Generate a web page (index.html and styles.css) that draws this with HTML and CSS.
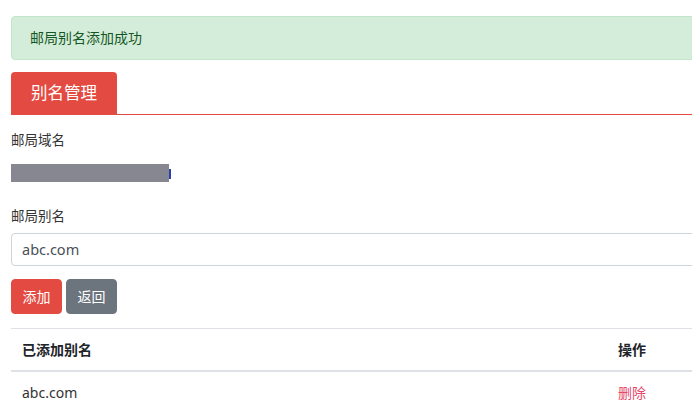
FILE: index.html
```html
<!DOCTYPE html>
<html lang="zh-CN">
<head>
<meta charset="utf-8">
<title>别名管理</title>
<link rel="stylesheet" href="styles.css">
</head>
<body>
<div class="page">
  <div class="alert">邮局别名添加成功</div>
  <div class="tabs"><span class="tab">别名管理</span></div>
  <div class="label first">邮局域名</div>
  <div class="domain"><span class="redact"></span><span class="tail"></span></div>
  <div class="label second">邮局别名</div>
  <div class="input">abc.com</div>
  <div class="actions">
    <button class="btn btn-red">添加</button>
    <button class="btn btn-gray">返回</button>
  </div>
  <table class="list">
    <thead>
      <tr><th class="c1">已添加别名</th><th class="c2">操作</th></tr>
    </thead>
    <tbody>
      <tr><td class="c1">abc.com</td><td class="c2"><a class="del">删除</a></td></tr>
    </tbody>
  </table>
</div>
</body>
</html>
```

FILE: styles.css
```css
html, body {
  margin: 0;
  padding: 0;
  overflow: hidden;
  background: #fff;
}
body {
  font-family: "Noto Sans", "Noto Sans CJK SC", sans-serif;
  color: #212529;
  font-size: 14px;
}
.page {
  width: 740px;
  padding: 16px 0 0 11px;
}
.alert {
  background: #d4edda;
  border: 1px solid #c3e6cb;
  border-radius: 4px;
  color: #155724;
  padding: 12px 18px;
  line-height: 18px;
  font-size: 14px;
}
.tabs {
  margin-top: 12px;
  display: flex;
  border-bottom: 1px solid #e34b42;
}
.tab {
  background: #e34b42;
  color: #fff;
  font-size: 16.5px;
  height: 42px;
  line-height: 42px;
  padding: 0 20px;
  border-radius: 4px 4px 0 0;
}
.label {
  font-size: 13.5px;
  line-height: 20px;
  color: #333;
}
.label.first { margin-top: 15px; }
.label.second { margin-top: 24px; }
.domain {
  margin-top: 14px;
  display: flex;
  align-items: center;
  height: 18px;
}
.redact {
  width: 158px;
  height: 18px;
  background: #878792;
}
.tail {
  width: 2px;
  height: 10px;
  margin-top: 2px;
  background: #2a3fb0;
}
.input {
  margin-top: 7px;
  height: 31px;
  line-height: 31px;
  border: 1px solid #ced4da;
  border-radius: 4px;
  padding-left: 10px;
  color: #495057;
  font-size: 14.5px;
}
.actions {
  margin-top: 13px;
  display: flex;
  gap: 4px;
}
.btn {
  font-family: inherit;
  font-size: 14px;
  color: #fff;
  border: 1px solid transparent;
  border-radius: 4px;
  height: 35px;
  width: 51px;
  padding: 0;
  line-height: 33px;
}
.btn-red { background: #e34b42; border-color: #e34b42; }
.btn-gray { background: #6c757d; border-color: #6c757d; }
.list {
  margin-top: 14px;
  width: 100%;
  border-collapse: collapse;
}
.list th, .list td {
  text-align: left;
  padding: 0 11px;
  line-height: 20px;
  font-size: 14px;
}
.list th {
  height: 41px;
  border-top: 1px solid #dee2e6;
  border-bottom: 2px solid #dee2e6;
  font-weight: bold;
  color: #212529;
}
.list td {
  height: 41px;
  color: #333;
}
.list .c1 { width: 574px; }
.del {
  color: #e5466a;
}
```
